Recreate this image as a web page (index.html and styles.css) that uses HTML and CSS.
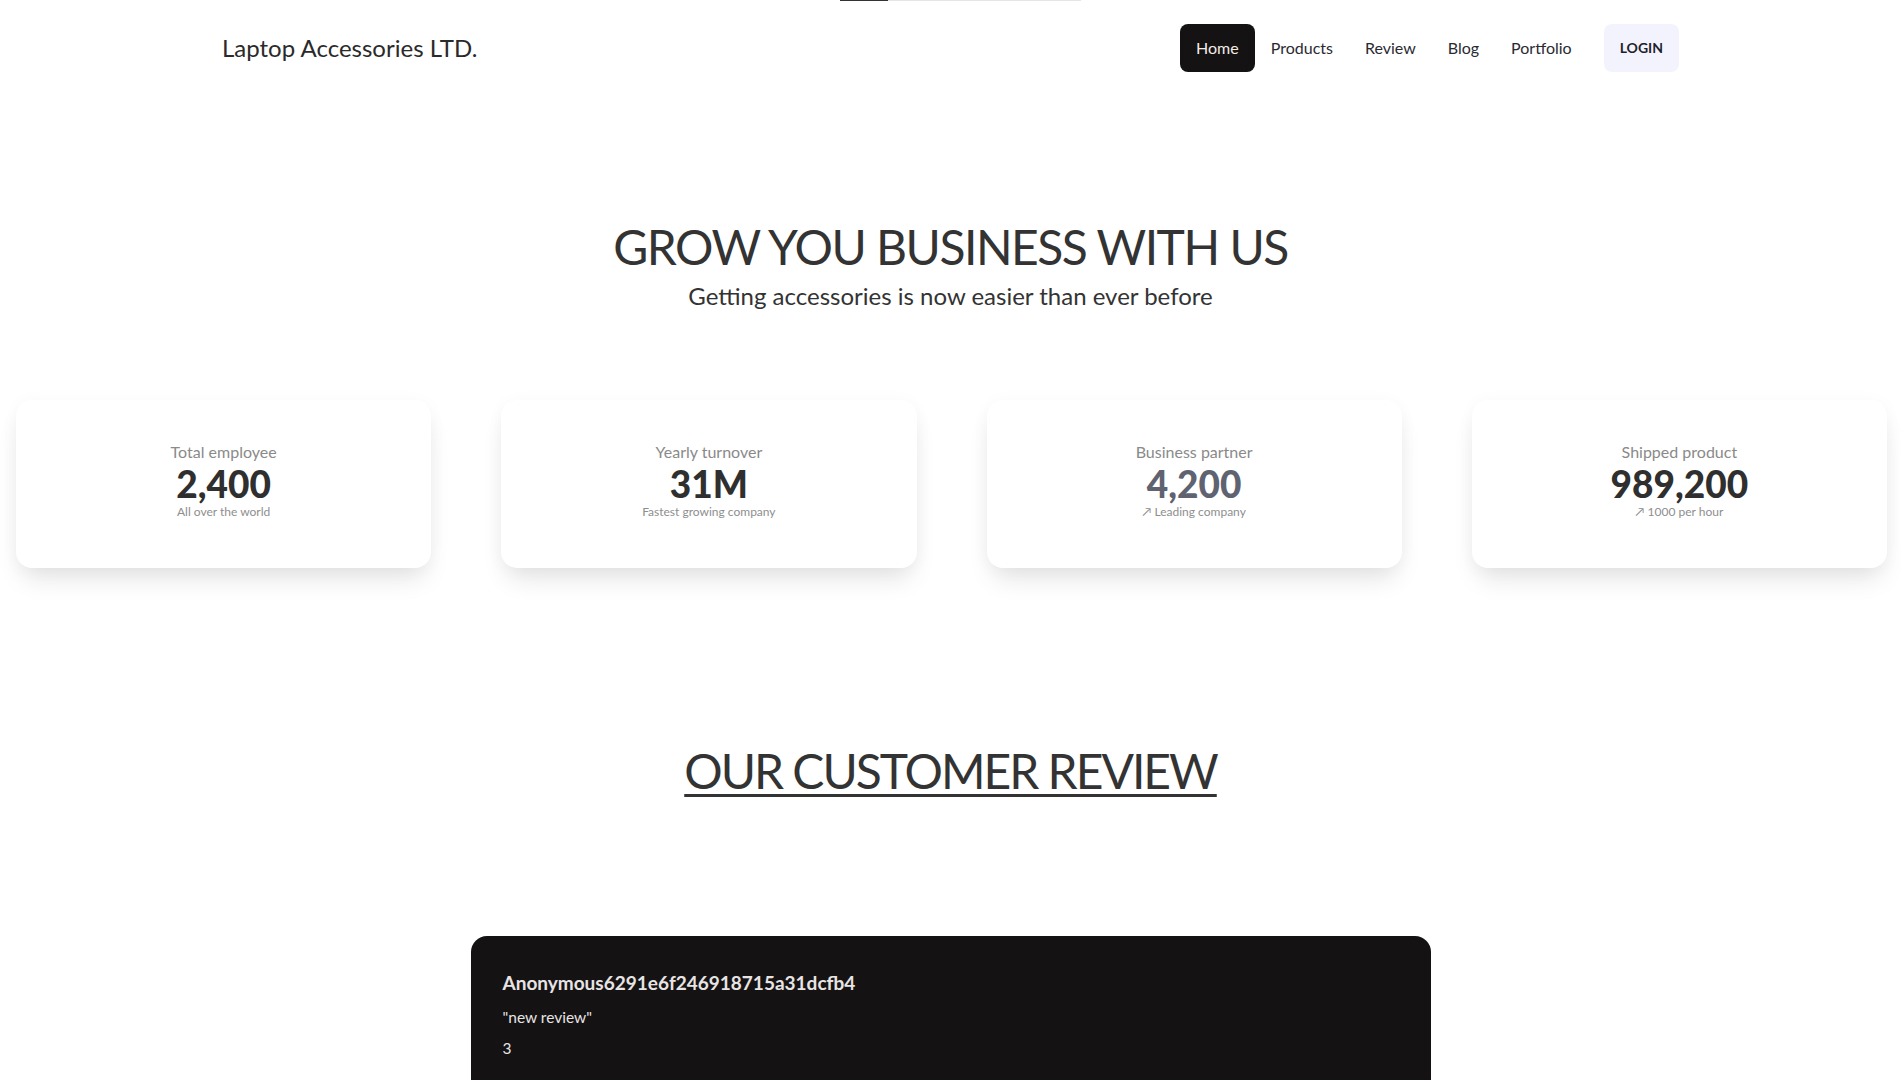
FILE: index.html
```html
<!DOCTYPE html>
<html lang="en">
<head>
<meta charset="utf-8">
<title>Laptop Accessories LTD.</title>
<link rel="stylesheet" href="styles.css">
</head>
<body>
<div class="loader"><div class="loader-fill"></div></div>
<header class="nav">
  <div class="nav-inner">
    <a class="logo" href="#">Laptop Accessories LTD.</a>
    <div class="nav-right">
      <ul class="menu">
        <li><a class="menu-item active" href="#">Home</a></li>
        <li><a class="menu-item" href="#">Products</a></li>
        <li><a class="menu-item" href="#">Review</a></li>
        <li><a class="menu-item" href="#">Blog</a></li>
        <li><a class="menu-item" href="#">Portfolio</a></li>
      </ul>
      <a class="login" href="#">Login</a>
    </div>
  </div>
</header>

<section class="hero">
  <h1 class="hero-title">GROW YOU BUSINESS WITH US</h1>
  <p class="hero-sub">Getting accessories is now easier than ever before</p>
</section>

<section class="stats">
  <div class="stat">
    <div class="stat-title">Total employee</div>
    <div class="stat-value">2,400</div>
    <div class="stat-desc">All over the world</div>
  </div>
  <div class="stat">
    <div class="stat-title">Yearly turnover</div>
    <div class="stat-value">31M</div>
    <div class="stat-desc">Fastest growing company</div>
  </div>
  <div class="stat">
    <div class="stat-title">Business partner</div>
    <div class="stat-value stat-value-alt">4,200</div>
    <div class="stat-desc">↗︎ Leading company</div>
  </div>
  <div class="stat">
    <div class="stat-title">Shipped product</div>
    <div class="stat-value">989,200</div>
    <div class="stat-desc">↗︎ 1000 per hour</div>
  </div>
</section>

<section class="reviews">
  <h2 class="reviews-title">OUR CUSTOMER REVIEW</h2>
  <div class="review-card">
    <h3 class="review-name">Anonymous6291e6f246918715a31dcfb4</h3>
    <p class="review-text">"new review"</p>
    <p class="review-rating">3</p>
  </div>
</section>
</body>
</html>
```

FILE: styles.css
```css
* { box-sizing: border-box; }

html, body {
  margin: 0;
  padding: 0;
  background: #ffffff;
}

body {
  font-family: Lato, "Open Sans", "Liberation Sans", sans-serif;
  color: #333333;
}

a { text-decoration: none; color: inherit; }

.loader {
  position: absolute;
  top: 0;
  left: 840px;
  width: 241px;
  height: 1px;
  background: #e5e5e5;
}

.loader-fill {
  width: 48px;
  height: 100%;
  background: #333333;
}

.nav {
  padding: 24px 0;
}

.nav-inner {
  max-width: 1457px;
  margin: 0 auto;
  display: flex;
  align-items: center;
  justify-content: space-between;
}

.logo {
  font-size: 24px;
  line-height: 32px;
  color: #2a2a2a;
}

.nav-right {
  display: flex;
  align-items: center;
  gap: 16px;
}

.menu {
  list-style: none;
  margin: 0;
  padding: 0;
  display: flex;
}

.menu-item {
  display: block;
  height: 48px;
  line-height: 48px;
  padding: 0 16px;
  font-size: 16px;
  color: #2a2a33;
  border-radius: 8px;
}

.menu-item.active {
  background: #141213;
  color: #f2ece4;
}

.login {
  display: block;
  height: 48px;
  line-height: 48px;
  padding: 0 16px;
  border-radius: 8px;
  background: #f3f3fd;
  color: #1f1f2b;
  font-size: 14px;
  font-weight: 700;
  text-transform: uppercase;
}

.hero {
  padding-top: 127px;
  text-align: center;
}

.hero-title {
  margin: 0;
  font-size: 48px;
  line-height: 48px;
  font-weight: 400;
  letter-spacing: -1.5px;
  color: #333333;
}

.hero-sub {
  margin: 9px 0 0;
  font-size: 24px;
  line-height: 32px;
  color: #333333;
}

.stats {
  display: grid;
  grid-template-columns: repeat(4, 1fr);
  gap: 70px;
  padding: 0 14px 0 16px;
  margin-top: 88px;
}

.stat {
  background: #ffffff;
  border-radius: 16px;
  box-shadow: 0 16px 26px -6px rgba(0, 0, 0, 0.11), 0 2px 18px rgba(0, 0, 0, 0.035);
  padding: 40px 24px 48px;
  text-align: center;
}

.stat-title {
  font-size: 16px;
  line-height: 24px;
  color: #8a8a8a;
}

.stat-value {
  font-size: 37px;
  line-height: 40px;
  font-weight: 900;
  color: #2f2f2f;
}

.stat-value-alt {
  color: #5f6270;
}

.stat-desc {
  font-size: 12px;
  line-height: 16px;
  color: #8e8e8e;
}

.reviews {
  margin-top: 179px;
  text-align: center;
  padding-bottom: 80px;
}

.reviews-title {
  margin: 0;
  font-size: 48px;
  line-height: 48px;
  font-weight: 400;
  letter-spacing: -2px;
  color: #333333;
  text-decoration: underline;
  text-decoration-thickness: 3px;
  text-underline-offset: 5px;
}

.review-card {
  width: 960px;
  margin: 141px auto 0;
  background: #141213;
  border-radius: 16px;
  padding: 33px 32px 60px;
  text-align: left;
  min-height: 220px;
}

.review-name {
  margin: 0;
  font-size: 19px;
  line-height: 28px;
  font-weight: 700;
  color: #e8e4e4;
}

.review-text {
  margin: 10px 0 0;
  font-size: 15.5px;
  line-height: 20px;
  color: #e8e4e4;
}

.review-rating {
  margin: 11px 0 0;
  font-size: 15.5px;
  line-height: 20px;
  color: #e8e4e4;
}
```
